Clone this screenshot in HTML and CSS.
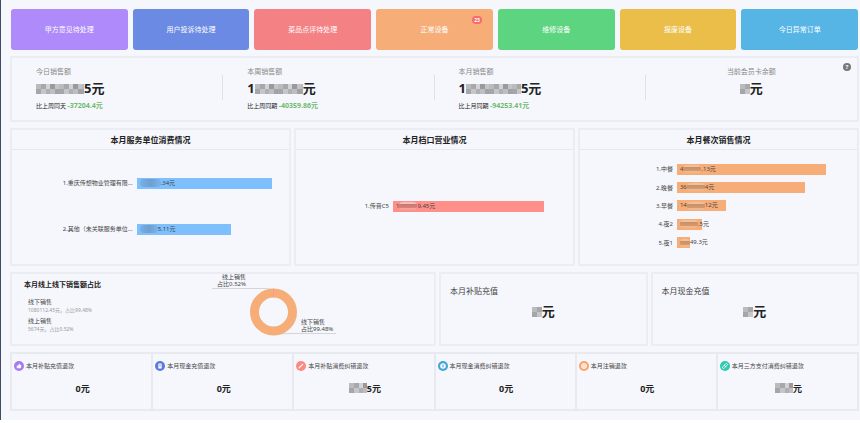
FILE: index.html
```
<!DOCTYPE html>
<html lang="zh-CN">
<head>
    <meta charset="UTF-8">
    <meta name="viewport" content="width=device-width, initial-scale=1.0">
    <title>经营数据</title>
    <link rel="stylesheet" href="styles.css">
</head>
<body>
    <main class="dashboard">
        <div class="tiles">
            <button class="tile purple">甲方意见待处理</button>
            <button class="tile blue">用户投诉待处理</button>
            <button class="tile red">菜品点评待处理</button>
            <button class="tile orange">正常设备<span class="badge">23</span></button>
            <button class="tile green">维修设备</button>
            <button class="tile yellow">报废设备</button>
            <button class="tile sky">今日异常订单</button>
        </div>

        <section class="card summary">
            <div class="summary-item">
                <p class="label">今日销售额</p>
                <p class="amount"><span class="mask mask-xl"></span>5元</p>
                <p class="compare">比上周同天 <b>-37204.4元</b></p>
            </div>
            <div class="summary-item">
                <p class="label">本周销售额</p>
                <p class="amount">1<span class="mask mask-xl"></span>元</p>
                <p class="compare">比上周同期 <b>-40359.86元</b></p>
            </div>
            <div class="summary-item">
                <p class="label">本月销售额</p>
                <p class="amount">1<span class="mask mask-xxl"></span>5元</p>
                <p class="compare">比上月同期 <b>-94253.41元</b></p>
            </div>
            <div class="summary-item center">
                <p class="label">当前会员卡余额</p>
                <p class="amount"><span class="mask mask-s"></span>元</p>
            </div>
            <button class="help" aria-label="帮助">?</button>
        </section>

        <div class="charts">
            <section class="card">
                <h2>本月服务单位消费情况</h2>
                <div class="chart wide-labels">
                    <div class="row">
                        <span class="name">1.重庆传想物业管理有限...</span>
                        <div class="track"><div class="bar bar-blue" style="width: 89%"><span class="mask tint-blue mask-l"></span>.34元</div></div>
                    </div>
                    <div class="row">
                        <span class="name">2.其他（未关联服务单位...</span>
                        <div class="track"><div class="bar bar-blue" style="width: 62%"><span class="mask tint-blue mask-m"></span>5.11元</div></div>
                    </div>
                </div>
            </section>
            <section class="card">
                <h2>本月档口营业情况</h2>
                <div class="chart">
                    <div class="row">
                        <span class="name">1.传音C5</span>
                        <div class="track"><div class="bar bar-red" style="width: 84%">1<span class="mask tint-red mask-m"></span>9.45元</div></div>
                    </div>
                </div>
            </section>
            <section class="card">
                <h2>本月餐次销售情况</h2>
                <div class="chart">
                    <div class="row">
                        <span class="name">1.中餐</span>
                        <div class="track"><div class="bar bar-orange" style="width: 83%">4<span class="mask tint-orange mask-m"></span>.13元</div></div>
                    </div>
                    <div class="row">
                        <span class="name">2.晚餐</span>
                        <div class="track"><div class="bar bar-orange" style="width: 71%">36<span class="mask tint-orange mask-m"></span>4元</div></div>
                    </div>
                    <div class="row">
                        <span class="name">3.早餐</span>
                        <div class="track"><div class="bar bar-orange" style="width: 27%">14<span class="mask tint-orange mask-m"></span>12元</div></div>
                    </div>
                    <div class="row">
                        <span class="name">4.夜2</span>
                        <div class="track"><div class="bar bar-orange" style="width: 14%"><span class="mask tint-orange mask-m"></span>.5元</div></div>
                    </div>
                    <div class="row">
                        <span class="name">5.夜1</span>
                        <div class="track"><div class="bar bar-orange" style="width: 7%"><span class="mask tint-orange mask-s"></span>49.3元</div></div>
                    </div>
                </div>
            </section>
        </div>

        <div class="middle">
            <section class="card ratio">
                <div class="ratio-text">
                    <h3>本月线上线下销售额占比</h3>
                    <dl>
                        <dt>线下销售</dt>
                        <dd>1080112.45元，占比99.48%</dd>
                        <dt>线上销售</dt>
                        <dd>5674元，占比0.52%</dd>
                    </dl>
                </div>
                <svg class="pie" width="126" height="64" viewBox="0 1 126 64">
                    <path d="M2 15.500H55Q61 15.500 63 17" fill="none" stroke="#d3d5da"/>
                    <path d="M64 62Q70 60.500 80 60.500H126" fill="none" stroke="#d3d5da"/>
                    <circle cx="63.500" cy="39" r="19" fill="none" stroke="#f6ad78" stroke-width="9"/>
                    <path d="M63.500 15.500V24.500" stroke="#fb9c8f"/>
                    <text x="36" y="6" text-anchor="end">线上销售</text>
                    <text x="36" y="13" text-anchor="end">占比0.52%</text>
                    <text x="91" y="51">线下销售</text>
                    <text x="91" y="58">占比99.48%</text>
                </svg>
            </section>
            <section class="card recharge">
                <h3>本月补贴充值</h3>
                <p class="amount"><span class="mask mask-s"></span>元</p>
            </section>
            <section class="card recharge">
                <h3>本月现金充值</h3>
                <p class="amount"><span class="mask mask-s"></span>元</p>
            </section>
        </div>

        <div class="refunds">
            <section class="refund">
                <h4>
                    <svg class="icon" viewBox="0 0 18 18"><circle cx="9" cy="9" r="9" fill="#a47cf0"/><path d="M5 8h2v5H5zM7.500 8 9.500 4.500q1.500 0 1 2.500H13v3l-1 3H7.500z" fill="#fff"/></svg>
                    本月补贴充值退款
                </h4>
                <p class="refund-value">0元</p>
            </section>
            <section class="refund">
                <h4>
                    <svg class="icon" viewBox="0 0 18 18"><circle cx="9" cy="9" r="9" fill="#5b7bdc"/><rect x="6" y="4.500" width="6" height="9" rx="1" fill="#fff"/><path d="M7.500 7h3M7.500 9h3" stroke="#5b7bdc"/></svg>
                    本月现金充值退款
                </h4>
                <p class="refund-value">0元</p>
            </section>
            <section class="refund">
                <h4>
                    <svg class="icon" viewBox="0 0 18 18"><circle cx="9" cy="9" r="9" fill="#fb8a80"/><path d="M5.500 12.500 12 6" stroke="#fff" stroke-width="2" stroke-linecap="round"/></svg>
                    本月补贴消费纠错退款
                </h4>
                <p class="refund-value"><span class="mask mask-m"></span>5元</p>
            </section>
            <section class="refund">
                <h4>
                    <svg class="icon" viewBox="0 0 18 18"><circle cx="9" cy="9" r="9" fill="#41a5d8"/><circle cx="9" cy="9" r="5" fill="#fff"/><path d="M7 6l2 2.500L11 6M9 8.500V12M7.500 9.500h3" fill="none" stroke="#41a5d8" stroke-width="1.200"/></svg>
                    本月现金消费纠错退款
                </h4>
                <p class="refund-value">0元</p>
            </section>
            <section class="refund">
                <h4>
                    <svg class="icon" viewBox="0 0 18 18"><circle cx="9" cy="9" r="9" fill="#f6a56d"/><circle cx="9" cy="9" r="4.500" fill="#fbd3b5" stroke="#fff" stroke-width="1.500"/><path d="M7 9h4" stroke="#fff" stroke-width="1.500"/></svg>
                    本月注销退款
                </h4>
                <p class="refund-value">0元</p>
            </section>
            <section class="refund">
                <h4>
                    <svg class="icon" viewBox="0 0 18 18"><circle cx="9" cy="9" r="9" fill="#2fcaae"/><g transform="rotate(-45 9 9)" fill="none" stroke="#fff" stroke-width="1.400"><rect x="3.500" y="7" width="6" height="4" rx="2"/><rect x="8.500" y="7" width="6" height="4" rx="2"/></g></svg>
                    本月三方支付消费纠错退款
                </h4>
                <p class="refund-value"><span class="mask mask-m"></span>元</p>
            </section>
        </div>
    </main>
</body>
</html>
```

FILE: styles.css
```
* {
    box-sizing: border-box;
}
body {
    margin: 0;
    background: #fff;
    color: #444;
    font-family: "Noto Sans", "Noto Sans CJK SC", sans-serif;
    font-size: 6px;
    line-height: 8px;
}
h2, h3, h4, p, dl, dd {
    margin: 0;
}
button {
    font-family: inherit;
    border: none;
    cursor: pointer;
}
.dashboard {
    display: flex;
    flex-direction: column;
    gap: 6px;
    padding: 9px 1px 9px 9px;
    border-left: 1px solid #3f4b6b;
    background: #f5f7fc;
}
.card {
    border: 2px solid #ebedf3;
    min-width: 0;
}

/* top buttons */
.tiles {
    display: flex;
    gap: 5px;
    padding: 0 1px;
}
.tile {
    position: relative;
    flex: 1;
    padding: 16px 0;
    border-radius: 3px;
    color: #fff;
    font-size: 7px;
    line-height: 9px;
}
.purple { background: #ae8afa; }
.blue { background: #6a8ae4; }
.red { background: #f48284; }
.orange { background: #f6ad78; }
.green { background: #5cd480; }
.yellow { background: #ebbe4a; }
.sky { background: #56b5e4; }
.badge {
    position: absolute;
    top: 7px;
    right: 11px;
    padding: 0 2px;
    border-radius: 4px;
    background: #f56c6c;
    font-size: 5px;
    font-weight: bold;
    line-height: 8px;
}

/* sales summary */
.summary {
    position: relative;
    display: grid;
    grid-template-columns: repeat(4, 1fr);
    padding: 9px 0 8px;
}
.summary-item {
    padding-left: 24px;
    background: linear-gradient(#dfe1e8, #dfe1e8) right 8px / 1px 25px no-repeat;
}
.summary-item.center {
    padding-left: 0;
    background: none;
    text-align: center;
}
.label {
    color: #888;
    font-size: 7px;
    line-height: 10px;
}
.amount {
    color: #222;
    font-size: 13px;
    font-weight: bold;
    line-height: 23px;
}
.compare {
    line-height: 11px;
    color: #222;
}
.compare b {
    color: #6fbb6f;
    font-size: 7px;
}
.help {
    position: absolute;
    top: 5px;
    right: 6px;
    width: 8px;
    height: 8px;
    padding: 0;
    border-radius: 50%;
    background: #777;
    color: #fff;
    font-size: 6px;
    font-weight: bold;
    line-height: 8px;
}

/* pixelated blocks over hidden digits */
.mask {
    display: inline-block;
    height: 10px;
    vertical-align: -1px;
    background:
        repeating-linear-gradient(90deg, #bbb 0 5px, #a8a8aa 5px 10px, #d2d3d6 10px 14px, #989a9e 14px 19px, #c4c4c8 19px 23px) 0 0 / 100% 50% no-repeat,
        repeating-linear-gradient(90deg, #a5a6aa 0 5px, #c6c6ca 5px 10px, #b0b0b3 10px 14px, #bebec2 14px 19px, #a2a2a6 19px 23px) 0 100% / 100% 50% no-repeat;
}
.mask-s { width: 10px; }
.mask-m { width: 18px; }
.mask-l { width: 21px; }
.mask-xl { width: 48px; }
.mask-xxl { width: 55px; }
.bar .mask {
    height: 8px;
    border-radius: 4px;
    vertical-align: middle;
}
.bar .tint-blue { background: linear-gradient(90deg, #7ab0e4, #6f9fce, #79b4ee); }
.bar .tint-red { background: linear-gradient(#f4bdb9 30%, #c97a74 30%, #d98079 75%, #f5a29b 75%); }
.bar .tint-orange { background: linear-gradient(#efc09b 25%, #c98e64 25%, #d69a6f 75%, #efb78e 75%); }

/* bar charts */
.charts {
    display: grid;
    grid-template-columns: repeat(3, 1fr);
    gap: 3px;
}
.charts h2 {
    padding: 5px 0;
    border-bottom: 1px solid #e6e8ee;
    color: #222;
    font-size: 8px;
    line-height: 9px;
    text-align: center;
}
.chart {
    display: flex;
    flex-direction: column;
    justify-content: space-around;
    height: 92px;
    margin: 10px 0 12px;
}
.row {
    display: grid;
    grid-template-columns: 35% 1fr;
    align-items: center;
}
.wide-labels .row {
    grid-template-columns: 45% 1fr;
}
.name {
    padding-right: 4px;
    text-align: right;
    white-space: nowrap;
}
.bar {
    padding-left: 3px;
    line-height: 11px;
    height: 11px;
    white-space: nowrap;
}
.bar-blue { background: #7dc0fd; }
.bar-red { background: #ff9089; }
.bar-orange { background: #f6ad78; }

/* online / offline ratio and recharge */
.middle {
    display: grid;
    grid-template-columns: 425fr 208fr 208fr;
    gap: 3px;
}
.middle h3 {
    font-size: 8px;
    line-height: 10px;
}
.ratio {
    display: flex;
}
.ratio-text {
    flex: 0 0 47%;
    padding: 6px 0 8px 12px;
}
.middle .ratio h3 {
    color: #222;
    font-size: 7px;
}
.ratio dl {
    padding: 8px 0 0 4px;
}
.ratio dd {
    margin-bottom: 3px;
    color: #999;
    font-size: 5px;
}
.pie text {
    fill: #444;
    font-size: 6px;
}
.recharge {
    padding: 12px 9px;
}
.recharge .amount {
    padding-top: 3px;
    line-height: 24px;
    text-align: center;
}
.middle .recharge h3 {
    font-weight: normal;
}

/* refunds */
.refunds {
    display: grid;
    grid-template-columns: repeat(6, 1fr);
    border: 1px solid #e8eaf0;
}
.refund {
    padding: 7px 0 13px 2px;
    border: 1px solid #e8eaf0;
}
.refund h4 {
    display: flex;
    align-items: center;
    gap: 2px;
    font-weight: normal;
    white-space: nowrap;
}
.icon {
    width: 10px;
    height: 10px;
}
.refund-value {
    padding-top: 10px;
    color: #222;
    font-size: 9px;
    font-weight: bold;
    line-height: 15px;
    text-align: center;
}
```
